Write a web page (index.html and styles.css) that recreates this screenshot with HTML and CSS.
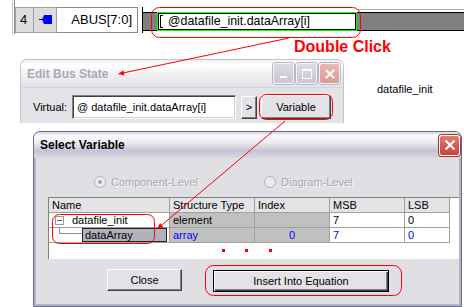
FILE: index.html
```html
<!DOCTYPE html>
<html lang="en">
<head>
  <meta charset="UTF-8">
  <title>Edit Bus State - Select Variable</title>
  <link rel="stylesheet" href="styles.css">
</head>
<body>
  <div class="busrow">
    <div class="rail"></div>
    <div class="cell num">4</div>
    <div class="cell port">
      <svg width="22" height="24" viewBox="0 0 22 24">
        <line x1="5" y1="11.5" x2="9" y2="11.5" stroke="#000" stroke-width="1"/>
        <polygon points="8,11.5 10,7 18,7 18,16 10,16" fill="#0000ff"/>
      </svg>
    </div>
    <div class="cell name">ABUS[7:0]</div>
    <div class="bus">
      <div class="bus-grey"></div>
      <div class="bus-edit">
        <div class="bus-edit-in"><span class="caret"></span>@datafile_init.dataArray[i]</div>
      </div>
      <div class="bus-grey rest"></div>
    </div>
  </div>

  <div class="note-dbl">Double Click</div>
  <div class="note-var">datafile_init</div>

  <div class="win bus-win">
    <div class="win-title">
      <span class="title-text">Edit Bus State</span>
      <div class="tbtns">
        <span class="tb"><svg width="18" height="18" viewBox="0 0 18 18"><rect x="5" y="11" width="7" height="2" fill="#fff"/></svg></span>
        <span class="tb"><svg width="18" height="18" viewBox="0 0 18 18"><rect x="4.5" y="4.5" width="9" height="9" fill="none" stroke="#fff" stroke-width="1"/><rect x="4" y="4" width="10" height="2" fill="#fff"/></svg></span>
        <span class="tb close-off"><svg width="18" height="18" viewBox="0 0 18 18"><path d="M5 5 L13 13 M13 5 L5 13" stroke="#fff" stroke-width="2"/></svg></span>
      </div>
    </div>
    <div class="win-body">
      <label class="vlabel">Virtual:</label>
      <div class="field">@ datafile_init.dataArray[i]</div>
      <button class="btn arrow">&gt;</button>
      <button class="btn var">Variable</button>
    </div>
  </div>

  <div class="win dlg">
    <div class="dlg-title">
      <span class="title-text">Select Variable</span>
      <span class="xbtn"><svg width="18" height="18" viewBox="0 0 18 18"><path d="M4.5 4.5 L13.5 13.5 M13.5 4.5 L4.5 13.5" stroke="#fff" stroke-width="2.2"/></svg></span>
    </div>
    <div class="dlg-main">
      <div class="dlg-body">
        <div class="levels">
          <div class="lvl first"><span class="radio on"></span>Component-Level</div>
          <div class="lvl"><span class="radio"></span>Diagram-Level</div>
        </div>
        <div class="grid-wrap">
          <div class="grid">
            <div class="gh">Name</div>
            <div class="gh">Structure Type</div>
            <div class="gh">Index</div>
            <div class="gh">MSB</div>
            <div class="gh">LSB</div>

            <div class="gc tree"><span class="tog"></span>datafile_init</div>
            <div class="gc dim">element</div>
            <div class="gc dim"></div>
            <div class="gc">7</div>
            <div class="gc">0</div>

            <div class="gc tree child"><span class="elbow"></span><span class="sel">dataArray</span></div>
            <div class="gc dim blue">array</div>
            <div class="gc dim blue mid">0</div>
            <div class="gc blue">7</div>
            <div class="gc blue">0</div>
          </div>
        </div>
      </div>
      <div class="dlg-foot">
        <button class="btn close">Close</button>
        <button class="btn default">Insert Into Equation</button>
      </div>
    </div>
  </div>

  <svg class="marks" width="464" height="307" viewBox="0 0 464 307">
    <g fill="none" stroke="#ff0000" stroke-width="1">
      <rect x="151.5" y="7.5" width="209" height="30" rx="8"/>
      <rect x="259.5" y="94.5" width="73" height="25" rx="7"/>
      <rect x="52.5" y="214.5" width="102" height="29" rx="7"/>
      <rect x="205.5" y="265.5" width="196" height="30" rx="8"/>
      <line x1="289" y1="38" x2="122" y2="73.2"/>
      <line x1="285" y1="121" x2="160" y2="226.5"/>
    </g>
    <g fill="#ff0000">
      <polygon points="118,74 124.4,75.4 123.4,70.2"/>
      <polygon points="157,229 163.4,227.2 160,223"/>
      <rect x="222" y="249" width="3" height="3"/>
      <rect x="245" y="249" width="3" height="3"/>
      <rect x="269" y="249" width="3" height="3"/>
    </g>
  </svg>
</body>
</html>
```

FILE: styles.css
```css
* {
  box-sizing: border-box;
}
html, body {
  margin: 0;
  padding: 0;
}
body {
  width: 464px;
  height: 307px;
  position: relative;
  overflow: hidden;
  background: #fff;
  font-family: "Liberation Sans", Arial, sans-serif;
  font-size: 11px;
  color: #000;
}

/* bus row at the top */
.busrow {
  position: absolute;
  left: 12px;
  top: 0;
  width: 452px;
  height: 34px;
  display: flex;
}
.rail {
  width: 3px;
  border-left: 1px solid #c8c8c8;
  border-right: 1px solid #8c8c8c;
}
.cell {
  margin-top: 7px;
  height: 26px;
  border: 1px solid #a0a0a0;
  background: #dcdcdc;
  font-size: 13px;
  line-height: 24px;
}
.cell.num {
  width: 19px;
  padding-left: 4px;
}
.cell.port {
  width: 23px;
  border-left: none;
}
.cell.name {
  width: 81px;
  border-left: none;
  border-color: #8a8a8a;
  background: #fff;
  text-align: right;
  padding-right: 5px;
}
.bus {
  flex: 1;
  margin: 7px 0 0 4px;
  height: 26px;
  border-left: 1px solid #000;
  display: flex;
  padding-top: 5px;
}
.bus-grey {
  width: 14px;
  height: 19px;
  border-top: 1px solid #000;
  border-bottom: 1px solid #000;
  background: #808080;
}
.bus-grey.rest {
  flex: 1;
  position: relative;
}
.bus-grey.rest::before {
  content: "";
  position: absolute;
  left: 0;
  right: 0;
  top: -4px;
  height: 1px;
  background: #b8b8b8;
}
.bus-edit {
  width: 200px;
  height: 19px;
  border: 1px solid #00ff00;
  background: #fff;
}
.bus-edit-in {
  height: 100%;
  border: 1px solid #000;
  font-size: 12.4px;
  line-height: 15px;
  display: flex;
  align-items: center;
  white-space: nowrap;
  overflow: hidden;
}
.caret {
  width: 3px;
  height: 13px;
  margin: 0 5px 0 1px;
  border: 1px solid #000;
  border-right: none;
}

/* annotations */
.note-dbl {
  position: absolute;
  left: 294px;
  top: 38px;
  font-size: 16px;
  line-height: 18px;
  font-weight: bold;
  color: #ff0000;
}
.note-var {
  position: absolute;
  left: 377px;
  top: 82px;
  line-height: 14px;
}
.marks {
  position: absolute;
  left: 0;
  top: 0;
  z-index: 10;
  pointer-events: none;
}

/* windows */
.win {
  position: absolute;
}
.title-text {
  font-size: 12px;
  font-weight: bold;
}
.bus-win {
  left: 20px;
  top: 59px;
  width: 324px;
  height: 64px;
  border: 1px solid #c4c4d0;
  border-bottom: none;
  border-radius: 7px 7px 0 0;
  background: #e3e3e7;
  overflow: hidden;
}
.win-title {
  height: 28px;
  display: flex;
  align-items: center;
  padding: 0 3px 0 6px;
  background: linear-gradient(#f2f2f5 0%, #ffffff 20%, #f0f0f3 55%, #e2e2e8 100%);
  border-bottom: 1px solid #d4d4dc;
}
.win-title .title-text {
  color: #a9a9b2;
}
.tbtns {
  margin-left: auto;
  display: flex;
  gap: 2px;
}
.tb {
  width: 21px;
  height: 21px;
  border: 1px solid #f4f4f8;
  border-radius: 3px;
  background: linear-gradient(#dcdce6, #c6c6d4);
  display: flex;
  align-items: center;
  justify-content: center;
  box-shadow: 0 0 0 1px #b8b8c8;
}
.tb.close-off {
  background: linear-gradient(#eab8b4, #dc9a94);
}
.win-body {
  display: flex;
  align-items: center;
  padding: 7px 0 0 12px;
}
.vlabel {
  width: 34px;
  margin-right: 5px;
}
.field {
  width: 164px;
  height: 24px;
  border: 1px solid;
  border-color: #808080 #ffffff #ffffff #808080;
  box-shadow: inset 1px 1px 0 #404040, inset -1px -1px 0 #d4d0c8;
  background: #fff;
  padding-left: 4px;
  line-height: 22px;
  white-space: nowrap;
  overflow: hidden;
}
.btn {
  font-family: "Liberation Sans", Arial, sans-serif;
  font-size: 11px;
  color: #000;
  background: #e3e3e7;
  border: 1px solid;
  border-color: #ffffff #404040 #404040 #ffffff;
  box-shadow: inset -1px -1px 0 #808080;
  padding: 0;
  margin: 0;
}
.btn.arrow {
  width: 16px;
  height: 23px;
  margin-left: 5px;
}
.btn.var {
  width: 70px;
  height: 24px;
  margin-left: 4px;
}

/* select variable dialog */
.dlg {
  left: 33px;
  top: 131px;
  width: 429px;
  height: 176px;
  border: 1px solid #6c6c84;
  border-radius: 7px 7px 0 0;
  background: #b4b4c8;
  overflow: hidden;
  z-index: 2;
}
.dlg-title {
  height: 26px;
  display: flex;
  align-items: center;
  padding: 0 1px 0 6px;
  background: linear-gradient(#d4d4e0 0%, #fbfbfd 14%, #ececf2 40%, #c4c4d6 72%, #d8d8e4 100%);
}
.xbtn {
  margin-left: auto;
  width: 21px;
  height: 21px;
  border: 1px solid #ffffff;
  border-radius: 3px;
  background: linear-gradient(#e27a6e, #c4453a);
  box-shadow: 0 0 0 1px #9c3a34;
  display: flex;
  align-items: center;
  justify-content: center;
}
.dlg-main {
  margin: 0 2px 2px;
  background: #e0dfe4;
}
.dlg-body {
  padding: 18px 0 0 12px;
}
.levels {
  height: 12px;
  display: flex;
  align-items: center;
  padding-left: 46px;
  color: #a8a8ac;
  text-shadow: 1px 1px 0 #f8f8fa;
}
.lvl {
  display: flex;
  align-items: center;
  gap: 5px;
}
.lvl.first {
  width: 170px;
}
.radio {
  width: 12px;
  height: 12px;
  border-radius: 50%;
  border: 1px solid #b4b4b8;
  background: #ececef;
  display: flex;
  align-items: center;
  justify-content: center;
}
.radio.on::after {
  content: "";
  width: 4px;
  height: 4px;
  border-radius: 50%;
  background: #a4a4a8;
}
.grid-wrap {
  margin-top: 9px;
  height: 62px;
  background: #fff;
  border-left: 1px solid #808080;
  border-top: 1px solid #808080;
}
.grid {
  display: grid;
  grid-template-columns: 121px 85px 75px 75px 45px;
}
.gh, .gc {
  height: 15px;
  border-right: 1px solid #a0a0a0;
  border-bottom: 1px solid #a0a0a0;
  line-height: 14px;
  padding-left: 3px;
  white-space: nowrap;
  overflow: hidden;
}
.gh {
  height: 15px;
  background: #e4e4e7;
}
.gc.dim {
  background: #c0c0c0;
}
.gc.blue {
  color: #0000ff;
}
.gc.mid {
  text-align: center;
  padding-left: 0;
}
.gc.tree {
  display: flex;
  align-items: center;
  padding-left: 6px;
}
.tog {
  width: 9px;
  height: 9px;
  border: 1px solid #9a9a9a;
  margin-right: 8px;
  position: relative;
  background: #fff;
}
.tog::after {
  content: "";
  position: absolute;
  left: 1px;
  right: 1px;
  top: 3px;
  height: 1px;
  background: #606060;
}
.gc.child {
  align-items: flex-start;
  padding-left: 10px;
}
.elbow {
  width: 23px;
  height: 6px;
  border-left: 1px solid #909090;
  border-bottom: 1px solid #909090;
}
.sel {
  width: 85px;
  height: 14px;
  border: 1px solid #202020;
  background: #b2b2bc;
  line-height: 12px;
  padding-left: 2px;
}
.dlg-foot {
  height: 45px;
  display: flex;
  align-items: flex-start;
  gap: 31px;
  padding: 10px 0 0 71px;
}
.btn.close {
  width: 75px;
  height: 22px;
}
.btn.default {
  width: 176px;
  height: 22px;
  margin-top: 1px;
  border: 1px solid #000;
  box-shadow: inset 1px 1px 0 #ffffff, inset -1px -1px 0 #404040, inset -2px -2px 0 #808080;
}
```
